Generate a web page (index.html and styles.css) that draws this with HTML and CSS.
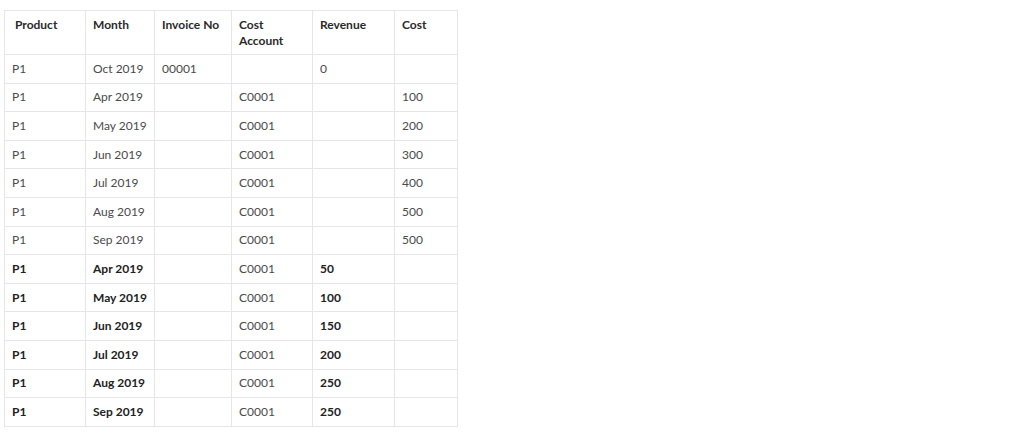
FILE: index.html
```html
<!DOCTYPE html>
<html>
<head>
<meta charset="utf-8">
<link rel="stylesheet" href="styles.css">
</head>
<body>
<div class="page">
<table class="data">
<colgroup>
<col class="c1"><col class="c2"><col class="c3"><col class="c4"><col class="c5"><col class="c6">
</colgroup>
<thead>
<tr><th class="first">Product</th><th>Month</th><th>Invoice No</th><th>Cost<br>Account</th><th>Revenue</th><th>Cost</th></tr>
</thead>
<tbody>
<tr><td>P1</td><td>Oct 2019</td><td>00001</td><td></td><td>0</td><td></td></tr>
<tr><td>P1</td><td>Apr 2019</td><td></td><td>C0001</td><td></td><td>100</td></tr>
<tr><td>P1</td><td>May 2019</td><td></td><td>C0001</td><td></td><td>200</td></tr>
<tr><td>P1</td><td>Jun 2019</td><td></td><td>C0001</td><td></td><td>300</td></tr>
<tr><td>P1</td><td>Jul 2019</td><td></td><td>C0001</td><td></td><td>400</td></tr>
<tr><td>P1</td><td>Aug 2019</td><td></td><td>C0001</td><td></td><td>500</td></tr>
<tr><td>P1</td><td>Sep 2019</td><td></td><td>C0001</td><td></td><td>500</td></tr>
<tr><td class="b">P1</td><td class="b">Apr 2019</td><td></td><td>C0001</td><td class="b">50</td><td></td></tr>
<tr><td class="b">P1</td><td class="b">May 2019</td><td></td><td>C0001</td><td class="b">100</td><td></td></tr>
<tr><td class="b">P1</td><td class="b">Jun 2019</td><td></td><td>C0001</td><td class="b">150</td><td></td></tr>
<tr><td class="b">P1</td><td class="b">Jul 2019</td><td></td><td>C0001</td><td class="b">200</td><td></td></tr>
<tr><td class="b">P1</td><td class="b">Aug 2019</td><td></td><td>C0001</td><td class="b">250</td><td></td></tr>
<tr><td class="b">P1</td><td class="b">Sep 2019</td><td></td><td>C0001</td><td class="b">250</td><td></td></tr>
</tbody>
</table>
</div>
</body>
</html>
```

FILE: styles.css
```css
html, body {
  margin: 0;
  padding: 0;
  background: #fff;
}
.page {
  padding: 10px 4px;
}
.data {
  border-collapse: collapse;
  table-layout: fixed;
  width: 453px;
  font-family: "Lato", "Liberation Sans", sans-serif;
  font-size: 12px;
  color: #4a4a4a;
}
.c1 { width: 81px; }
.c2 { width: 69px; }
.c3 { width: 77px; }
.c4 { width: 81px; }
.c5 { width: 82px; }
.c6 { width: 63px; }
.data th, .data td {
  border: 1px solid #e6e6e6;
  text-align: left;
  vertical-align: middle;
  padding: 0 7px;
  white-space: nowrap;
}
.data th {
  font-weight: 700;
  color: #2a2a2a;
  line-height: 16px;
  height: 44px;
  vertical-align: top;
  padding-top: 6px;
  padding-bottom: 0;
  box-sizing: border-box;
}
.data th.first {
  padding-left: 10px;
}
.data tbody tr {
  height: 28.6px;
}
.data td {
  line-height: 16px;
  padding-top: 0;
  padding-bottom: 0;
}
.data td.b {
  font-weight: 700;
  color: #222;
}
```
